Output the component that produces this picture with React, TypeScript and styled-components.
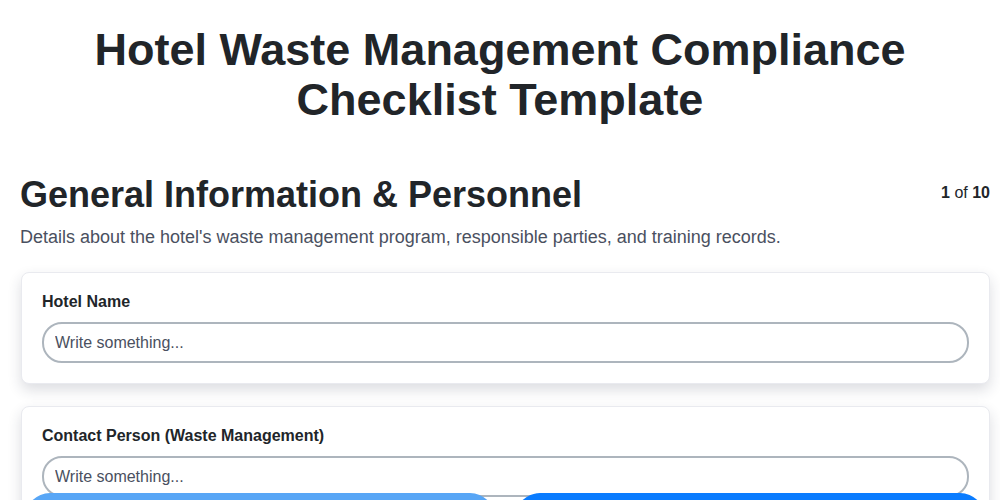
import React from "react";
import styled, { createGlobalStyle } from "styled-components";

const Global = createGlobalStyle`
  html, body { margin: 0; padding: 0; background: #fff; }
  body { font-family: "Liberation Sans", Arial, sans-serif; color: #212529; }
  * { box-sizing: border-box; }
`;

const Header = styled.header`
  padding: 25px 0 0;
`;

const Content = styled.main`
  padding: 0 10px 120px 20px;
`;

const Title = styled.h1`
  margin: 0;
  text-align: center;
  font-size: 45px;
  line-height: 50px;
  font-weight: 700;
  color: #212529;
`;

const SectionHead = styled.div`
  display: flex;
  justify-content: space-between;
  align-items: flex-start;
  margin-top: 48px;
`;

const SectionTitle = styled.h2`
  margin: 0;
  font-size: 36px;
  line-height: 44px;
  font-weight: 700;
  color: #212529;
`;

const Counter = styled.div`
  font-size: 16px;
  line-height: 20px;
  margin-top: 10px;
  color: #212529;
  b { font-weight: 700; }
`;

const Description = styled.p`
  margin: 8px 0 0;
  font-size: 18px;
  line-height: 24px;
  color: #4a5060;
`;

const Cards = styled.div`
  display: flex;
  flex-direction: column;
  gap: 22px;
  margin-top: 23px;
  padding-left: 1px;
`;

const Card = styled.div`
  background: #fff;
  border: 1px solid #e9eaef;
  border-radius: 8px;
  box-shadow: 0 6px 14px rgba(40, 45, 70, 0.16);
  padding: 20px;
  display: flex;
  flex-direction: column;
  gap: 11px;
`;

const Label = styled.label`
  font-size: 16px;
  line-height: 18px;
  font-weight: 700;
  color: #212529;
`;

const Input = styled.input`
  height: 41px;
  width: 100%;
  border: 2px solid #adb5bd;
  border-radius: 20px;
  padding: 0 11px;
  font-family: "Liberation Sans", Arial, sans-serif;
  font-size: 16px;
  color: #212529;
  background: #fff;
  outline: none;
  &::placeholder { color: #4a5060; }
`;

const BottomBar = styled.div`
  position: fixed;
  left: 25px;
  right: 15px;
  top: 493px;
  display: flex;
  gap: 20px;
`;

const NavButton = styled.button<{ $primary?: boolean }>`
  flex: 1;
  height: 50px;
  border: none;
  border-radius: 25px;
  background: ${(p) => (p.$primary ? "#0a7cff" : "#58a6f6")};
  color: #fff;
  font-family: "Liberation Sans", Arial, sans-serif;
  font-size: 16px;
`;

export default function App() {
  return (
    <>
      <Global />
      <Header>
        <Title>
          Hotel Waste Management Compliance
          <br />
          Checklist Template
        </Title>
      </Header>
      <Content>
        <SectionHead>
          <SectionTitle>General Information &amp; Personnel</SectionTitle>
          <Counter>
            <b>1</b> of <b>10</b>
          </Counter>
        </SectionHead>
        <Description>
          Details about the hotel's waste management program, responsible parties, and training records.
        </Description>
        <Cards>
          <Card>
            <Label>Hotel Name</Label>
            <Input placeholder="Write something..." />
          </Card>
          <Card>
            <Label>Contact Person (Waste Management)</Label>
            <Input placeholder="Write something..." />
          </Card>
        </Cards>
      </Content>
      <BottomBar>
        <NavButton>Previous</NavButton>
        <NavButton $primary>Next</NavButton>
      </BottomBar>
    </>
  );
}
